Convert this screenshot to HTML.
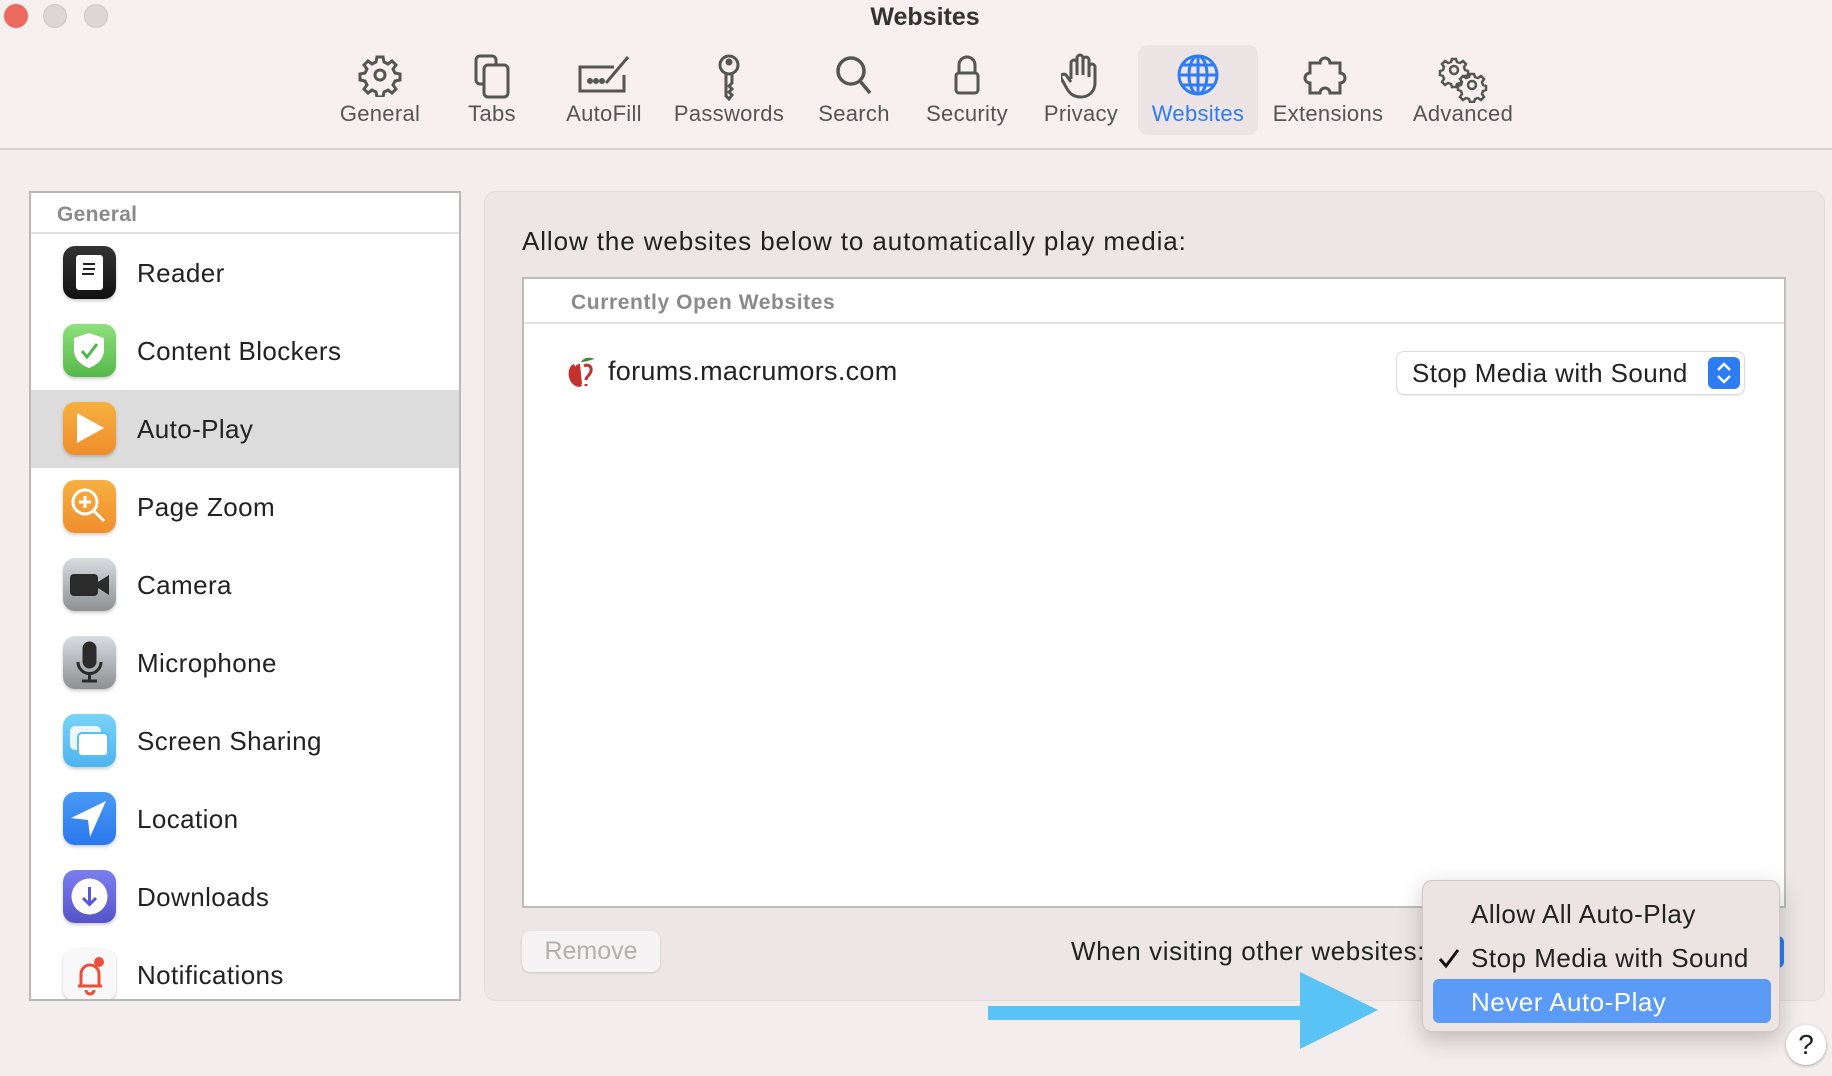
<!DOCTYPE html>
<html><head><meta charset="utf-8">
<style>
*{margin:0;padding:0;box-sizing:border-box}
body{width:1832px;height:1076px;overflow:hidden;background:#f3eded;font-family:"Liberation Sans",sans-serif;color:#222;position:relative}
.abs{position:absolute}
#tb{left:0;top:0;width:1832px;height:150px;background:#f8f0f0;border-bottom:2px solid #d6d0d0}
.tl{position:absolute;top:4px;width:24px;height:24px;border-radius:50%}
.ti{position:absolute;top:45px;width:120px;height:90px;text-align:center;color:#555}
.ti svg{position:absolute;left:50%;top:8px;transform:translateX(-50%)}
.ti span{position:absolute;left:-10px;right:-10px;top:56px;font-size:22px;letter-spacing:0.3px}
#side{left:29px;top:191px;width:432px;height:810px;background:#fff;border:2px solid #bdb8b8;overflow:hidden}
.row{position:absolute;left:0;width:430px;height:78px}
.row .ic{position:absolute;left:32px;top:12px;width:53px;height:53px;border-radius:12px;box-shadow:0 2px 3px rgba(0,0,0,.2);overflow:hidden}
.row .lb{position:absolute;left:106px;top:24px;font-size:26px;color:#222;letter-spacing:0.4px}
#panel{left:484px;top:191px;width:1341px;height:810px;background:#ece6e6;border-radius:12px;border:1px solid #e2dcdc}
#table{left:522px;top:277px;width:1264px;height:631px;background:#fff;border:2px solid #c0bcbc}
.mi{position:absolute;left:48px;font-size:26px;color:#222;letter-spacing:0.5px}
</style></head><body>
<div id="tb" class="abs"></div>
<div class="tl" style="left:4px;background:#ed6a5e"></div>
<div class="tl" style="left:43px;background:#dcd6d6;border:1px solid #cfc8c8"></div>
<div class="tl" style="left:84px;background:#dcd6d6;border:1px solid #cfc8c8"></div>
<div class="abs" style="left:0;width:1850px;top:3px;text-align:center;font-size:25px;font-weight:bold;color:#333">Websites</div>

<div class="abs" style="left:1138px;top:45px;width:120px;height:90px;background:#ede5e5;border-radius:10px"></div>

<div class="ti" style="left:320px"><svg width="44" height="44" viewBox="0 0 44 44" fill="none" stroke="#555" stroke-width="3"><path d="M19 4h6l1 5 4 2 4-3 4 4-3 4 2 4 5 1v6l-5 1-2 4 3 4-4 4-4-3-4 2-1 5h-6l-1-5-4-2-4 3-4-4 3-4-2-4-5-1v-6l5-1 2-4-3-4 4-4 4 3 4-2z"/><circle cx="22" cy="22" r="5"/></svg><span>General</span></div>
<div class="ti" style="left:432px"><svg width="44" height="46" viewBox="0 0 44 46" fill="none" stroke="#555" stroke-width="3"><rect x="6" y="3" width="20" height="28" rx="4"/><rect x="14" y="12" width="24" height="32" rx="4" fill="#f8f0f0"/></svg><span>Tabs</span></div>
<div class="ti" style="left:544px"><svg width="60" height="46" viewBox="0 0 60 46" fill="none" stroke="#555" stroke-width="3"><path d="M40 14H6v24h44V22"/><path d="M32 30l22-26" stroke-width="3"/><circle cx="16" cy="28" r="1.5" fill="#555"/><circle cx="22" cy="28" r="1.5" fill="#555"/><circle cx="28" cy="28" r="1.5" fill="#555"/></svg><span>AutoFill</span></div>
<div class="ti" style="left:669px"><svg width="30" height="48" viewBox="0 0 30 48" fill="none" stroke="#555" stroke-width="3"><circle cx="15" cy="12" r="9"/><circle cx="15" cy="9" r="2" fill="#555"/><path d="M12 21v22l3 3 3-4-3-3 3-3-3-3 3-3v-9"/></svg><span>Passwords</span></div>
<div class="ti" style="left:794px"><svg width="40" height="44" viewBox="0 0 40 44" fill="none" stroke="#555" stroke-width="3.5"><circle cx="17" cy="18" r="13"/><path d="M26 28l10 12"/></svg><span>Search</span></div>
<div class="ti" style="left:907px"><svg width="30" height="44" viewBox="0 0 30 44" fill="none" stroke="#555" stroke-width="3"><path d="M7 20v-8a8 8 0 0116 0v8"/><rect x="4" y="20" width="22" height="20" rx="3"/></svg><span>Security</span></div>
<div class="ti" style="left:1021px"><svg width="40" height="46" viewBox="0 0 40 46" fill="none" stroke="#555" stroke-width="3"><path d="M10 26V10a3 3 0 016 0v12V5a3 3 0 016 0v17V7a3 3 0 016 0v17-10a3 3 0 016 0v16c0 8-6 14-14 14s-12-4-15-10l-5-9a3 3 0 015-3l5 7"/></svg><span>Privacy</span></div>
<div class="ti" style="left:1138px;color:#2d7cf2"><svg width="44" height="44" viewBox="0 0 44 44" fill="none" stroke="#2d7cf2" stroke-width="3"><circle cx="22" cy="22" r="19"/><ellipse cx="22" cy="22" rx="9" ry="19"/><path d="M22 3v38M3 22h38M6 12h32M6 32h32"/></svg><span>Websites</span></div>
<div class="ti" style="left:1268px"><svg width="60" height="44" viewBox="0 0 60 44" fill="none" stroke="#555" stroke-width="3"><path d="M12 10h10a5 5 0 1110 0h10v10a5 5 0 110 10v10H32a5 5 0 10-10 0H12V30a5 5 0 110-10z"/></svg><span>Extensions</span></div>
<div class="ti" style="left:1403px"><svg width="60" height="50" viewBox="0 0 60 50" fill="none" stroke="#555" stroke-width="2.5"><path d="M19 6h4l1 3 3 1 3-2 3 3-2 3 1 3 3 1v4l-3 1-1 3 2 3-3 3-3-2-3 1-1 3h-4l-1-3-3-1-3 2-3-3 2-3-1-3-3-1v-4l3-1 1-3-2-3 3-3 3 2 3-1z"/><circle cx="21" cy="17" r="4"/><path d="M37 21h4l1 3 3 1 3-2 3 3-2 3 1 3 3 1v4l-3 1-1 3 2 3-3 3-3-2-3 1-1 3h-4l-1-3-3-1-3 2-3-3 2-3-1-3-3-1v-4l3-1 1-3-2-3 3-3 3 2 3-1z" fill="#f8f0f0"/><circle cx="39" cy="32" r="4"/></svg><span>Advanced</span></div>

<div id="side" class="abs">
 <div class="abs" style="left:0;top:0;width:430px;height:41px;border-bottom:2px solid #e2e0e0;"><span class="abs" style="left:26px;top:10px;font-size:21px;font-weight:bold;color:#8a8a8a;letter-spacing:0.3px">General</span></div>
 <div class="row" style="top:41px"><div class="ic" style="background:linear-gradient(#333,#111)"><div class="abs" style="left:13px;top:9px;width:27px;height:35px;background:#fff;border-radius:3px"></div><div class="abs" style="left:20px;top:17px;width:12px;height:2px;background:#222;box-shadow:0 5px 0 #222,-1px 10px 0 -0px #222"></div></div><div class="lb">Reader</div></div>
 <div class="row" style="top:119px"><div class="ic" style="background:linear-gradient(#8ee07a,#55b84c)"><svg width="53" height="53" viewBox="0 0 53 53"><path d="M26 9l15 5v12c0 9-7 15-15 18-8-3-15-9-15-18V14z" fill="#fff"/><path d="M19 27l5 6 10-13" stroke="#4cb84a" stroke-width="3" fill="none"/></svg></div><div class="lb">Content Blockers</div></div>
 <div class="row" style="top:197px;background:#dcdcdc"><div class="ic" style="background:linear-gradient(#f6b040,#ef8e2c)"><svg width="53" height="53"><path d="M14 11l27 15-27 15z" fill="#fff"/></svg></div><div class="lb">Auto-Play</div></div>
 <div class="row" style="top:275px"><div class="ic" style="background:linear-gradient(#f6b040,#ef8e2c)"><svg width="53" height="53" fill="none" stroke="#fff" stroke-width="3"><circle cx="22" cy="22" r="12"/><path d="M31 31l10 10M22 16v12M16 22h12"/></svg></div><div class="lb">Page Zoom</div></div>
 <div class="row" style="top:353px"><div class="ic" style="background:linear-gradient(#d8dde2,#8e9092)"><svg width="53" height="53"><rect x="7" y="16" width="28" height="22" rx="4" fill="#2b2b2b"/><path d="M35 24l11-7v20l-11-7z" fill="#2b2b2b"/></svg></div><div class="lb">Camera</div></div>
 <div class="row" style="top:431px"><div class="ic" style="background:linear-gradient(#d8dde2,#8e9092)"><svg width="53" height="53" fill="none" stroke="#2b2b2b" stroke-width="3"><rect x="21" y="7" width="11" height="24" rx="5.5" fill="#2b2b2b"/><path d="M15 26a11 11 0 0023 0M26.5 37v8M19 45h15"/></svg></div><div class="lb">Microphone</div></div>
 <div class="row" style="top:509px"><div class="ic" style="background:linear-gradient(#7ad3f7,#4cb4ef)"><div class="abs" style="left:7px;top:12px;width:31px;height:24px;background:#fff;border-radius:5px;opacity:.85"></div><div class="abs" style="left:14px;top:18px;width:32px;height:25px;background:#fff;border-radius:5px;border:2px solid #5bbdf2"></div></div><div class="lb">Screen Sharing</div></div>
 <div class="row" style="top:587px"><div class="ic" style="background:linear-gradient(#4a9af6,#2a78ec)"><svg width="53" height="53"><path d="M43 9L8 26l17 2 2 17z" fill="#fff"/></svg></div><div class="lb">Location</div></div>
 <div class="row" style="top:665px"><div class="ic" style="background:linear-gradient(#7a7ff0,#5654c8)"><svg width="53" height="53"><circle cx="26.5" cy="26.5" r="18" fill="#fff"/><path d="M26.5 17v17M20 28l6.5 6.5L33 28" stroke="#5856d0" stroke-width="3" fill="none"/></svg></div><div class="lb">Downloads</div></div>
 <div class="row" style="top:743px"><div class="ic" style="background:#f8f8f8"><svg width="53" height="53" fill="none" stroke="#ea4e3d" stroke-width="3"><path d="M15 38h24M18 38V26a9 9 0 0118 0v12M23 42a4 4 0 008 0"/><circle cx="36" cy="14" r="5" fill="#ea4e3d" stroke="none"/></svg></div><div class="lb">Notifications</div></div>
</div>

<div id="panel" class="abs"></div>
<div class="abs" style="left:522px;top:226px;font-size:26px;color:#222;letter-spacing:0.9px;white-space:nowrap">Allow the websites below to automatically play media:</div>
<div id="table" class="abs">
 <div class="abs" style="left:0;top:0;width:1260px;height:45px;border-bottom:2px solid #e2e0e0"><span class="abs" style="left:47px;top:12px;font-size:21px;font-weight:bold;color:#8a8a8a;letter-spacing:0.6px">Currently Open Websites</span></div>
 <svg class="abs" style="left:42px;top:77px" width="34" height="34" viewBox="0 0 34 34"><path d="M8 8c-6 2-7 12-3 18 3 4 7 6 11 4" fill="#c4302b"/><path d="M14 8c-5 0-8 6-6 12s6 8 8 8" fill="#c4302b"/><path d="M18 10c4-2 8 0 7 5s-5 5-5 9m0 4v2" stroke="#c4302b" stroke-width="3" fill="none"/><path d="M15 6c3-5 9-5 14-3-5 1-9 3-14 3z" fill="#3a8a3a"/></svg>
 <div class="abs" style="left:84px;top:77px;font-size:27px;color:#222;letter-spacing:0.3px">forums.macrumors.com</div>
 <div class="abs" style="left:873px;top:73px;width:347px;height:42px;background:#fff;border-radius:7px;box-shadow:0 0 0 1px #dcdcdc,0 1px 2px rgba(0,0,0,.2)"><span class="abs" style="left:15px;top:6px;font-size:26px;letter-spacing:0.4px">Stop Media with Sound</span><div class="abs" style="left:311px;top:5px;width:32px;height:32px;border-radius:6px;background:#2d7cf2"><svg width="32" height="32" fill="none" stroke="#fff" stroke-width="2.5"><path d="M10 13l6-6 6 6M10 19l6 6 6-6"/></svg></div></div>
</div>

<div class="abs" style="left:522px;top:931px;width:138px;height:41px;background:#f5f3f3;border-radius:8px;box-shadow:0 1px 2px rgba(0,0,0,.15);text-align:center;font-size:25px;color:#b4b0b0;line-height:41px">Remove</div>
<div class="abs" style="left:1071px;top:936px;font-size:26px;color:#222;white-space:nowrap;letter-spacing:0.6px">When visiting other websites:</div>
<div class="abs" style="left:1740px;top:936px;width:44px;height:32px;background:#2d7cf2;border-radius:6px"></div>

<div class="abs" style="left:988px;top:1006px;width:320px;height:14px;background:#59c3f6"></div>
<svg class="abs" style="left:1300px;top:972px" width="80" height="78"><path d="M0 0L78 38 0 77z" fill="#59c3f6"/></svg>

<div class="abs" style="left:1422px;top:880px;width:358px;height:152px;background:#ece4e3;border-radius:10px;border:1px solid #cfc8c8;box-shadow:0 8px 24px rgba(0,0,0,.22)">
 <div class="mi" style="top:18px">Allow All Auto-Play</div>
 <svg class="abs" style="left:15px;top:66px" width="22" height="22"><path d="M2 12l6 7L20 3" stroke="#111" stroke-width="3" fill="none"/></svg>
 <div class="mi" style="top:62px">Stop Media with Sound</div>
 <div class="abs" style="left:10px;top:98px;width:338px;height:44px;background:#5b9bf6;border-radius:6px"></div>
 <div class="mi" style="top:106px;color:#fff">Never Auto-Play</div>
</div>

<div class="abs" style="left:1786px;top:1025px;width:40px;height:40px;border-radius:50%;background:#fff;box-shadow:0 1px 3px rgba(0,0,0,.3);text-align:center;font-size:28px;line-height:40px;color:#222">?</div>
</body></html>
